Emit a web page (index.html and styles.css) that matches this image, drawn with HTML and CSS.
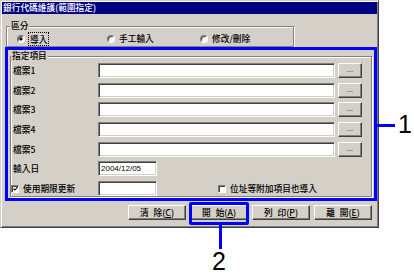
FILE: index.html
```html
<!DOCTYPE html>
<html lang="zh-Hant">
<head>
    <meta charset="UTF-8">
    <title>銀行代碼維護(範圍指定)</title>
    <link rel="stylesheet" href="styles.css">
</head>
<body>
    <div class="pagina">
        <div class="ventana">
            <div class="titulo">銀行代碼維護(範圍指定)</div>

            <fieldset class="grupo grupo-modo">
                <legend>區分</legend>
                <div class="fila-radios">
                    <label class="opcion"><span class="radio marcado"></span><span class="foco">導入</span></label>
                    <label class="opcion"><span class="radio"></span>手工輸入</label>
                    <label class="opcion"><span class="radio"></span>修改/刪除</label>
                </div>
            </fieldset>

            <div class="marco-azul">
                <fieldset class="grupo grupo-items">
                    <legend>指定項目</legend>
                    <div class="filas">
                        <div class="fila"><span class="etiqueta">檔案1</span><span class="campo"></span><span class="boton-ref">...</span></div>
                        <div class="fila"><span class="etiqueta">檔案2</span><span class="campo"></span><span class="boton-ref">...</span></div>
                        <div class="fila"><span class="etiqueta">檔案3</span><span class="campo"></span><span class="boton-ref">...</span></div>
                        <div class="fila"><span class="etiqueta">檔案4</span><span class="campo"></span><span class="boton-ref">...</span></div>
                        <div class="fila"><span class="etiqueta">檔案5</span><span class="campo"></span><span class="boton-ref">...</span></div>
                        <div class="fila"><span class="etiqueta">輸入日</span><span class="campo corto">2004/12/05</span></div>
                        <div class="fila">
                            <label class="etiqueta check">
                                <span class="casilla">
                                    <svg width="6" height="6" viewBox="0 0 6 6"><path d="M0.5 2.5 L2.2 4.3 L5.5 0.8" fill="none" stroke="#000" stroke-width="1.3"/></svg>
                                </span>使用期限更新
                            </label>
                            <span class="campo corto"></span>
                            <label class="check extra"><span class="casilla"></span>位址等附加項目也導入</label>
                        </div>
                    </div>
                </fieldset>
            </div>

            <div class="botonera">
                <button class="boton">清 除(<u>C</u>)</button>
                <button class="boton destacado">開 始(<u>A</u>)</button>
                <button class="boton">列 印(<u>P</u>)</button>
                <button class="boton">離 開(<u>E</u>)</button>
            </div>
        </div>

        <!-- llamadas de la figura -->
        <span class="linea linea-1"></span>
        <span class="numero numero-1">1</span>
        <span class="linea linea-2"></span>
        <span class="numero numero-2">2</span>
    </div>
</body>
</html>
```

FILE: styles.css
```css
body {
    margin: 0;
    background-color: #fff;
    font-family: "Noto Sans CJK TC", "Liberation Sans", sans-serif;
    font-size: 8.7px;
    font-weight: 500;
    color: #000;
}
.pagina {
    position: relative;
    width: 414px;
    height: 277px;
}
.ventana {
    width: 379px;
    height: 228px;
    box-sizing: border-box;
    padding: 1px;
    background-color: #d4d0c8;
    border: 1px solid;
    border-color: #d4d0c8 #404040 #404040 #d4d0c8;
    box-shadow: inset 1px 1px #fff, inset -1px -1px #808080;
}
.titulo {
    height: 12px;
    line-height: 12px;
    padding-left: 1px;
    background-color: #000080;
    color: #fff;
}

/* grupos */
.grupo {
    margin: 0;
    padding: 0;
    border: 1px solid #808080;
    box-shadow: inset 1px 1px #fff, 1px 1px #fff;
}
.grupo legend {
    padding: 0 1px;
    line-height: 12px;
    background-color: #d4d0c8;
}
.grupo-modo {
    width: 288px;
    margin: 6px 0 0 4px;
    box-sizing: border-box;
}
.grupo-modo legend {
    margin-left: 3px;
}
.fila-radios {
    display: grid;
    grid-template-columns: 90px 93px 1fr;
    align-items: center;
    height: 13px;
    padding: 0 0 1px 10px;
}
.opcion {
    display: flex;
    align-items: center;
    gap: 4px;
    line-height: 11px;
}
.radio {
    width: 8px;
    height: 8px;
    box-sizing: border-box;
    border-radius: 50%;
    border: 1px solid;
    border-color: #808080 #fff #fff #808080;
    background: #fff;
    box-shadow: inset 1px 1px #404040;
}
.radio.marcado {
    background: radial-gradient(circle, #000 0 1.3px, #fff 1.8px);
}
.foco {
    outline: 1px dotted #000;
    padding: 1px 1px 0;
}

/* marco azul */
.marco-azul {
    width: 372px;
    margin-left: 3px;
    box-sizing: border-box;
    padding: 0 2px 1px 2px;
    border: 3px solid #0000ff;
}
.filas {
    display: flex;
    flex-direction: column;
    gap: 4.7px;
    padding: 1px 0 0 2px;
}
.fila {
    display: flex;
    align-items: center;
    height: 15px;
}
.etiqueta {
    width: 85px;
    flex: none;
}
.campo {
    width: 237px;
    height: 15px;
    box-sizing: border-box;
    background-color: #fff;
    border: 1px solid;
    border-color: #808080 #fff #fff #808080;
    box-shadow: inset 1px 1px #404040, inset -1px -1px #d4d0c8;
}
.campo.corto {
    width: 59px;
    padding-left: 2px;
    font-family: "Liberation Sans", sans-serif;
    font-size: 8px;
    font-weight: 400;
    line-height: 13px;
}
.boton-ref {
    width: 24px;
    height: 15px;
    margin-left: 3px;
    box-sizing: border-box;
    border: 1px solid;
    border-color: #fff #404040 #404040 #fff;
    box-shadow: inset -1px -1px #808080;
    font-family: "Liberation Sans", sans-serif;
    font-size: 7px;
    font-weight: 400;
    line-height: 11px;
    text-align: center;
}
.check {
    display: flex;
    align-items: center;
    gap: 4px;
}
.etiqueta.check {
    width: 87px;
    margin-left: -2px;
}
.check.extra {
    margin-left: 61px;
}
.casilla {
    width: 8px;
    height: 8px;
    box-sizing: border-box;
    display: flex;
    align-items: center;
    justify-content: center;
    background-color: #fff;
    border: 1px solid;
    border-color: #808080 #fff #fff #808080;
    box-shadow: inset 1px 1px #404040;
}
.casilla svg {
    display: block;
    margin: 1px 0 0 1px;
}

/* botones inferiores */
.botonera {
    display: flex;
    justify-content: flex-end;
    gap: 4px;
    margin-top: 4px;
    padding-right: 5px;
}
.boton {
    position: relative;
    width: 58px;
    height: 15px;
    padding: 0;
    box-sizing: border-box;
    background-color: #d4d0c8;
    border: 1px solid;
    border-color: #fff #404040 #404040 #fff;
    box-shadow: inset -1px -1px #808080;
    font-family: "Noto Sans CJK TC", "Liberation Sans", sans-serif;
    font-size: 8.7px;
    font-weight: 500;
    line-height: 12px;
    word-spacing: 3px;
    color: #000;
}
.destacado::after {
    content: "";
    position: absolute;
    left: -2px;
    top: -4px;
    right: -2px;
    bottom: -6px;
    border: 3px solid #0000ff;
    border-radius: 2px;
}

/* llamadas */
.linea {
    position: absolute;
    background-color: #0000ff;
}
.linea-1 {
    left: 376px;
    top: 124px;
    width: 19px;
    height: 3px;
}
.linea-2 {
    left: 219px;
    top: 224px;
    width: 3px;
    height: 25px;
}
.numero {
    position: absolute;
    font-family: "Liberation Sans", sans-serif;
    font-size: 25px;
    line-height: 25px;
}
.numero-1 {
    left: 398px;
    top: 112px;
}
.numero-2 {
    left: 212px;
    top: 249px;
}
```
